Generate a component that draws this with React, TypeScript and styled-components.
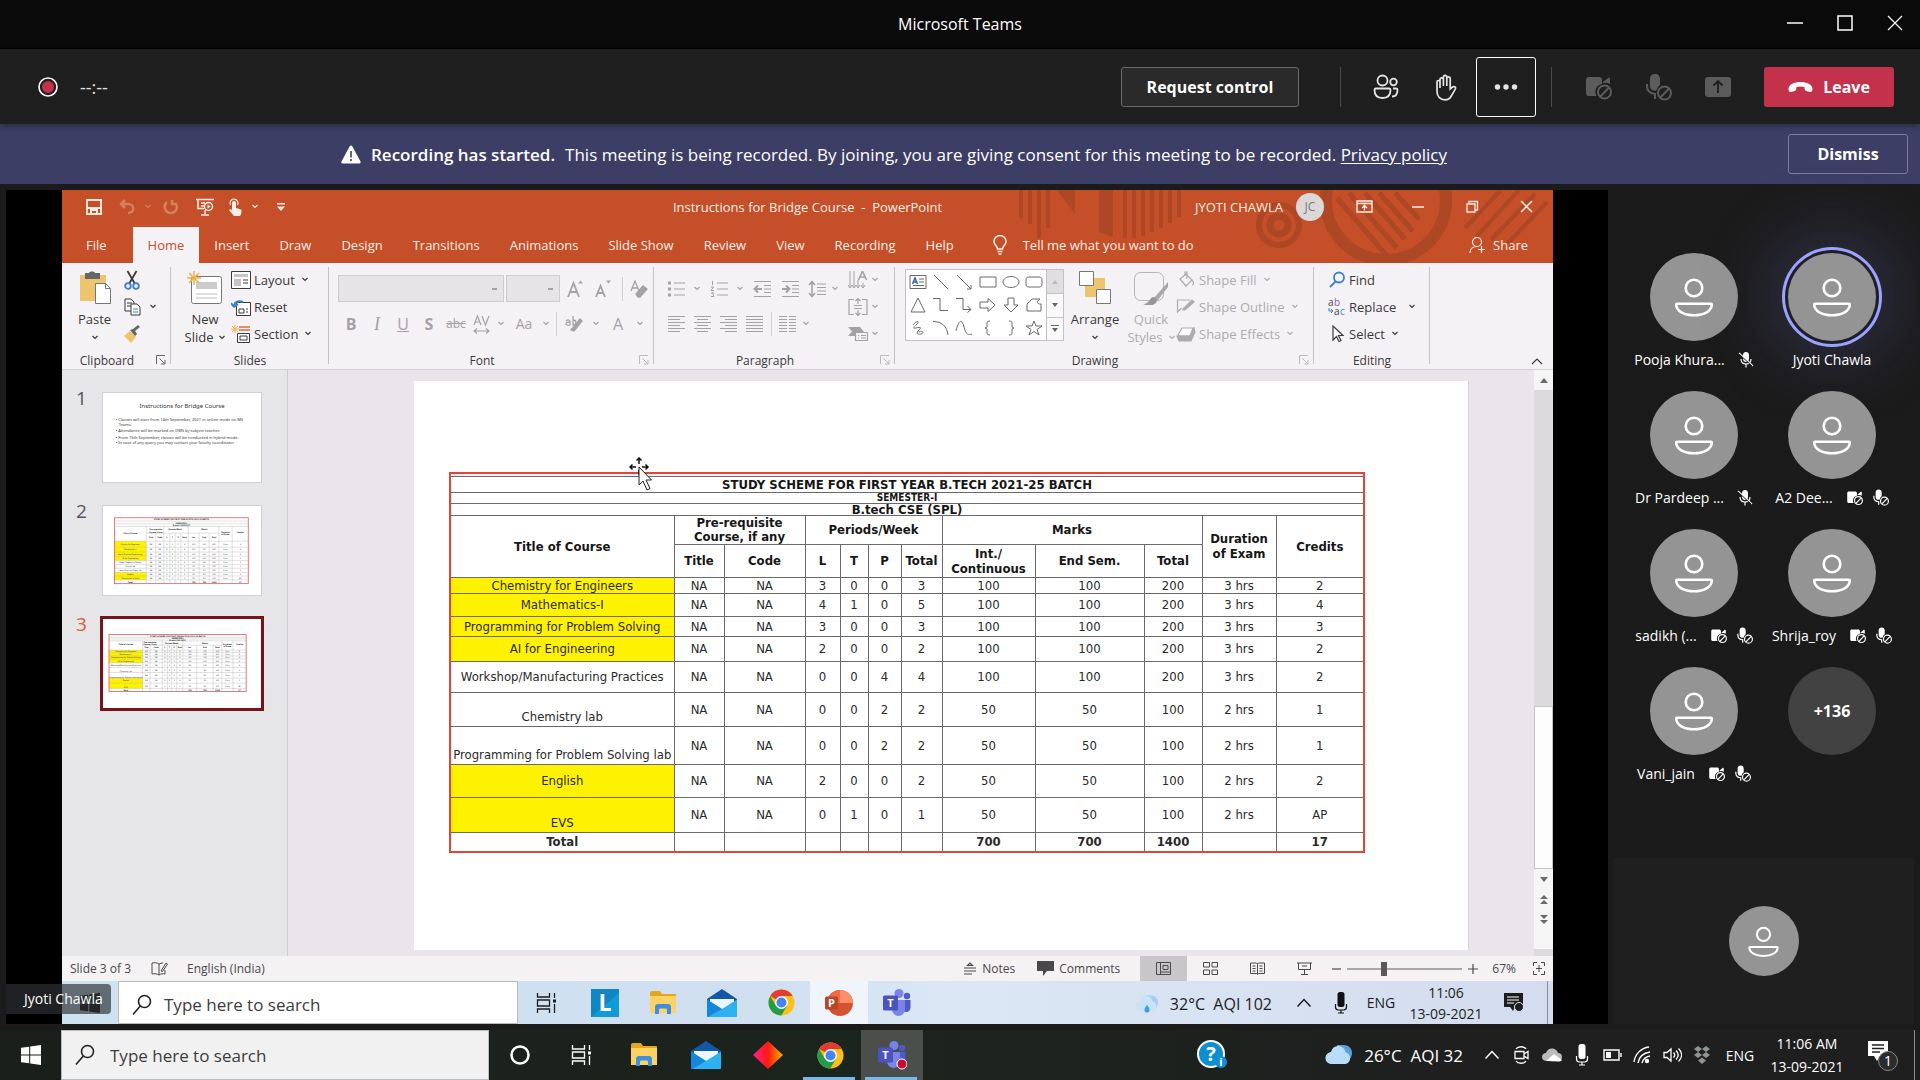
import React from "react";
import styled, { createGlobalStyle, css } from "styled-components";

const ui = `"Open Sans", "Noto Sans", sans-serif`;
const tableFont = `"DejaVu Sans Condensed", "DejaVu Sans", sans-serif`;

const Global = createGlobalStyle`
  * { box-sizing: border-box; }
  html, body { margin: 0; background: #1b1b1b; }
  body { font-family: ${ui}; color: #fff; }
  button, input, select { font: inherit; color: inherit; margin: 0; }
  button { background: none; border: 0; padding: 0; }
  svg { display: block; flex: none; }
`;

const Page = styled.div`
  min-height: 100vh;
  display: flex;
  flex-direction: column;
`;

/* ---------- icon helpers ---------- */
type IconProps = { w?: number; h?: number; box?: string; children: React.ReactNode; stroke?: number };
const Line = ({ w = 20, h = 20, box, children, stroke = 1.2 }: IconProps) => (
  <svg width={w} height={h} viewBox={box || `0 0 ${w} ${h}`} fill="none" stroke="currentColor" strokeWidth={stroke} aria-hidden="true">
    {children}
  </svg>
);
const Solid = ({ w = 20, h = 20, box, children }: IconProps) => (
  <svg width={w} height={h} viewBox={box || `0 0 ${w} ${h}`} fill="currentColor" aria-hidden="true">
    {children}
  </svg>
);
const Chevron = () => (
  <Line w={6} h={5} stroke={1.2}><path d="M.5 1 3 3.500 5.500 1" /></Line>
);

/* ---------- meeting window chrome ---------- */
const TitleBar = styled.header`
  height: 49px;
  display: grid;
  grid-template-columns: 1fr auto 1fr;
  align-items: center;
  background: #0a0a0a;
  border-bottom: 1px solid #000;
`;
const AppTitle = styled.h1`
  grid-column: 2;
  margin: 0;
  font-size: 16px;
  font-weight: 400;
`;
const WindowButtons = styled.div`
  display: flex;
  justify-content: flex-end;
`;
const WindowButton = styled.button`
  width: 50px;
  height: 48px;
  padding-bottom: 2px;
  display: grid;
  place-items: center;
`;
const Toolbar = styled.div`
  height: 75px;
  padding: 0 26px 0 38px;
  display: flex;
  align-items: center;
  background: #1f1f1f;
  box-shadow: 0 2px 6px rgba(0, 0, 0, 0.35);
  z-index: 1;
`;
const Timer = styled.span`
  margin-left: 22px;
  flex: 1;
  font-size: 18px;
  color: #e0e0e0;
`;
const OutlineButton = styled.button<{ $w: number }>`
  width: ${(p) => p.$w}px;
  height: 40px;
  border: 1px solid #6a6a6a;
  border-radius: 3px;
  background: #2a2a2a;
  font-size: 16px;
  font-weight: 700;
`;
const DismissButton = styled(OutlineButton)`
  background: transparent;
  border-color: #7c7ca0;
`;
const Divider = styled.span<{ $left: number; $right: number }>`
  width: 1px;
  height: 40px;
  margin: 0 ${(p) => p.$right}px 0 ${(p) => p.$left}px;
  background: #4a4a4a;
`;
const ToolButton = styled.button<{ $focus?: boolean; $off?: boolean }>`
  width: 60px;
  height: 60px;
  display: grid;
  place-items: center;
  color: ${(p) => (p.$off ? "#5c5c5c" : "#e4e4e4")};
  ${(p) => p.$focus && css`
    border: 1px solid #fff;
    border-radius: 3px;
  `}
`;
const LeaveButton = styled.button`
  width: 130px;
  height: 40px;
  margin-left: 16px;
  display: flex;
  align-items: center;
  justify-content: center;
  gap: 10px;
  border-radius: 3px;
  background: #c4314b;
  font-size: 16px;
  font-weight: 700;
`;
const Banner = styled.div`
  height: 60px;
  padding-right: 12px;
  display: flex;
  align-items: center;
  background: #3d3e66;
  font-size: 17px;
`;
const BannerText = styled.p`
  flex: 1;
  margin: 0;
  display: flex;
  align-items: center;
  justify-content: center;
  gap: 10px;
`;
const BannerLead = styled.strong`
  font-weight: 600;
`;
const PolicyLink = styled.a`
  color: #fff;
  text-decoration: underline;
  text-underline-offset: 2px;
`;

/* ---------- stage ---------- */
const Main = styled.main`
  flex: 1;
  display: flex;
  padding: 6px 0 6px 6px;
  background: #1b1b1b;
`;
const Stage = styled.section`
  position: relative;
  flex: 1;
  padding: 0 55px 0 56px;
  display: flex;
  background: #000;
`;
const PresenterTag = styled.span`
  position: absolute;
  left: 0;
  bottom: 10px;
  padding: 0 8px 0 18px;
  border-radius: 0 4px 4px 0;
  background: rgba(45, 48, 54, 0.68);
  font-size: 14px;
  line-height: 30px;
`;
const Share = styled.div`
  flex: 1;
  min-width: 0;
  display: flex;
  flex-direction: column;
  background: #f5f2f5;
  color: #3b393c;
  font-size: 13px;
`;

/* ---------- PowerPoint title + tabs ---------- */
const PptHead = styled.div`
  position: relative;
  background: #c44f28;
  color: #fdeee6;
`;
const HeadArt = styled.div`
  position: absolute;
  top: 0;
  right: 0;
  opacity: 0.6;
`;
const PptTitle = styled.div`
  position: relative;
  height: 37px;
  padding-bottom: 4px;
  display: grid;
  grid-template-columns: 1fr auto 1fr;
  align-items: center;
`;
const Quick = styled.div`
  display: flex;
  padding-left: 16px;
`;
const Cell = styled.button<{ $w: number; $h?: number; $dim?: boolean }>`
  width: ${(p) => p.$w}px;
  height: ${(p) => p.$h || 27}px;
  flex: none;
  display: grid;
  place-items: center;
  opacity: ${(p) => (p.$dim ? 0.3 : 1)};
`;
const DocName = styled.span`
  white-space: pre;
`;
const Account = styled.div`
  display: flex;
  align-items: center;
  justify-content: flex-end;
`;
const Initials = styled.span`
  width: 28px;
  height: 28px;
  margin: 0 13px;
  border-radius: 50%;
  background: #dcd8d8;
  color: #77777a;
  text-align: center;
  font-size: 12px;
  line-height: 28px;
`;
const Tabs = styled.nav`
  position: relative;
  height: 36px;
  padding-left: 9px;
  padding-right: 25px;
  display: flex;
  align-items: stretch;
`;
const Tab = styled.button<{ $on?: boolean; $file?: boolean }>`
  padding: 0 15px;
  margin-right: ${(p) => (p.$file ? 11 : 0)}px;
  background: ${(p) => (p.$on ? "#f5f2f5" : "transparent")};
  color: ${(p) => (p.$on ? "#c44f28" : "inherit")};
`;
const TellMe = styled.button`
  margin: 0 auto 0 24px;
  display: flex;
  align-items: center;
  gap: 16px;
`;
const ShareButton = styled.button`
  display: flex;
  align-items: center;
  gap: 7px;
`;

/* ---------- ribbon ---------- */
const Ribbon = styled.div`
  height: 107px;
  display: grid;
  grid-template-columns: 109px 158px 325px 241px 419px 116px 1fr;
  border-bottom: 1px solid #d2cfd3;
`;
const Group = styled.section`
  position: relative;
  padding-top: 3px;
  display: flex;
  flex-direction: column;
  &::after {
    content: "";
    position: absolute;
    right: 0;
    top: 4px;
    bottom: 5px;
    width: 1px;
    background: #c4c0c4;
  }
`;
const GroupBody = styled.div<{ $left?: number; $gray?: boolean }>`
  height: 81px;
  padding-left: ${(p) => p.$left || 0}px;
  display: flex;
  color: ${(p) => (p.$gray ? "#a5a2a5" : "inherit")};
`;
const GroupFoot = styled.div`
  display: flex;
  align-items: center;
  height: 22px;
  padding-top: 4px;
  font-size: 12px;
`;
const GroupName = styled.span`
  flex: 1;
  padding-left: 4px;
  text-align: center;
`;
const PlainName = styled(GroupName)`
  padding-left: 0;
`;
const Launcher = styled.button<{ $dim?: boolean }>`
  width: 15px;
  margin-left: 8px;
  color: ${(p) => (p.$dim ? "#bdbabd" : "#666")};
`;
const Big = styled.button<{ $w: number; $dim?: boolean }>`
  width: ${(p) => p.$w}px;
  height: 81px;
  padding-top: 5px;
  flex: none;
  display: flex;
  flex-direction: column;
  align-items: center;
  line-height: 18px;
  color: ${(p) => (p.$dim ? "#aeabae" : "inherit")};
  & > svg { margin-bottom: 5px; }
`;
const BigLine = styled.span`
  height: 18px;
  display: flex;
  align-items: center;
  gap: 6px;
`;
const Stack = styled.div`
  display: flex;
  flex-direction: column;
`;
const StackRow = styled.div`
  display: flex;
  height: 27px;
`;
const Small = styled.button<{ $dim?: boolean }>`
  height: 27px;
  display: flex;
  align-items: center;
  gap: 3px;
  white-space: nowrap;
  color: ${(p) => (p.$dim ? "#aeabae" : "inherit")};
`;
const SmallText = styled.span<{ $wide?: boolean }>`
  padding-right: ${(p) => (p.$wide ? 10 : 4)}px;
`;
const Rows = styled.div<{ $w?: number }>`
  width: ${(p) => (p.$w ? `${p.$w}px` : "auto")};
  padding-top: 9px;
  display: flex;
  flex-direction: column;
  gap: 8px;
`;
const Row = styled.div`
  height: 27px;
  display: flex;
  align-items: center;
`;
const Combo = styled.select<{ $w: number }>`
  appearance: none;
  width: ${(p) => p.$w}px;
  height: 27px;
  margin-right: 2px;
  border: 1px solid #cfccd0;
  border-radius: 0;
  background: #e7e4e8 linear-gradient(#a5a2a5, #a5a2a5) right 6px center / 5px 2px no-repeat;
  opacity: 1;
`;
const Sep = styled.span`
  width: 1px;
  height: 24px;
  margin: 0 4px;
  background: #d2cfd2;
`;
const Glyph = styled.span<{ $size?: number; $bold?: boolean; $italic?: boolean; $line?: string }>`
  font-size: ${(p) => p.$size || 16}px;
  line-height: 20px;
  font-weight: ${(p) => (p.$bold ? 700 : 400)};
  font-style: ${(p) => (p.$italic ? "italic" : "normal")};
  font-family: ${(p) => (p.$italic ? `"Liberation Serif", serif` : "inherit")};
  text-decoration: ${(p) => p.$line || "none"};
`;
const Gallery = styled.div`
  width: 159px;
  height: 72px;
  margin-top: 3px;
  display: flex;
  border: 1px solid #c4c1c5;
  background: #fff;
`;
const Shapes = styled.div`
  flex: 1;
  display: grid;
  grid-template-columns: repeat(6, 1fr);
  place-items: center;
  color: #6a686b;
`;
const GalleryScroll = styled.div`
  width: 17px;
  display: grid;
  grid-template-rows: repeat(3, 1fr);
  place-items: stretch;
  border-left: 1px solid #c4c1c5;
  color: #666;
`;
const ScrollCell = styled.button<{ $off?: boolean }>`
  display: grid;
  place-items: center;
  background: ${(p) => (p.$off ? "#e1dee1" : "#fbfafb")};
  color: ${(p) => (p.$off ? "#bbb" : "#666")};
  & + & { border-top: 1px solid #c4c1c5; }
`;
const Collapse = styled.button`
  justify-self: end;
  align-self: end;
  padding: 0 10px 4px 0;
`;

/* ---------- slide area ---------- */
const Work = styled.div`
  flex: 1;
  display: flex;
  background: #e9e5ea;
`;
const Thumbs = styled.ol`
  width: 226px;
  margin: 0;
  padding: 23px 0 0 14px;
  list-style: none;
  display: flex;
  flex-direction: column;
  gap: 24px;
  border-right: 1px solid #cfccd0;
  background: #e6e5e8;
`;
const ThumbItem = styled.li<{ $on?: boolean }>`
  display: grid;
  grid-template-columns: 27px 158px;
  font-size: 19px;
  line-height: 10px;
  color: ${(p) => (p.$on ? "#e0593a" : "#565458")};
`;
const ThumbFrame = styled.div<{ $on?: boolean }>`
  height: 89px;
  background: #fff;
  outline: ${(p) => (p.$on ? "3px solid #75141b" : "1px solid #cfd0d6")};
`;
const Canvas = styled.div`
  position: relative;
  flex: 1;
  display: flex;
  padding: 11px 65px 6px 126px;
`;
const Slide = styled.div`
  flex: 1;
  padding: 91px 103px 0 35px;
  background: #fff;
  border-right: 1px solid #d6d3d8;
`;
const MoveCursor = styled.div`
  position: absolute;
  left: 341px;
  top: 87px;
`;
const ScrollBar = styled.div`
  width: 19px;
  padding-bottom: 7px;
  display: flex;
  flex-direction: column;
  align-items: stretch;
  background: #dddade;
  color: #6a686b;
`;
const ScrollBtn = styled.button`
  height: 20px;
  display: grid;
  place-items: center;
  background: #f6f5f6;
`;
const ScrollTrack = styled.div`
  flex: 1;
  display: flex;
  align-items: flex-end;
`;
const ScrollThumb = styled.div`
  flex: 1;
  height: 34%;
  border: 1px solid #c6c3c7;
  background: #fdfdfd;
`;

/* ---------- study scheme table ---------- */
const Scheme = styled.table`
  width: 100%;
  table-layout: fixed;
  border-collapse: collapse;
  border: 2px solid #dd4638;
  font-family: ${tableFont};
  font-size: 13px;
  line-height: 15px;
  color: #2a2a2a;
  text-align: center;
`;
const SchemeRow = styled.tr<{ $h: number }>`
  height: ${(p) => p.$h}px;
`;
const Th = styled.th<{ $size?: number; $lh?: number }>`
  padding: 0;
  border: 1px solid #6b696b;
  font-size: ${(p) => p.$size || 13}px;
  line-height: ${(p) => p.$lh || 15}px;
  white-space: pre-line;
  color: #161616;
`;
const Td = styled.td<{ $mark?: boolean; $low?: boolean; $bold?: boolean }>`
  padding: 0;
  padding-bottom: ${(p) => (p.$low ? 2 : 0)}px;
  border: 1px solid #6b696b;
  white-space: nowrap;
  vertical-align: ${(p) => (p.$low ? "bottom" : "middle")};
  background: ${(p) => (p.$mark ? "#fff200" : "transparent")};
  font-weight: ${(p) => (p.$bold ? 700 : 400)};
`;
const Strip = styled.td`
  padding: 0;
  height: 3px;
  background: #f1eff0;
`;

/* ---------- status bar ---------- */
const Status = styled.footer`
  height: 25px;
  padding-left: 8px;
  display: flex;
  align-items: center;
  background: #f5f2f4;
  font-size: 12px;
  color: #4a484b;
`;
const StatusText = styled.button<{ $right?: number }>`
  display: flex;
  align-items: center;
  gap: 5px;
  margin-right: ${(p) => p.$right || 0}px;
`;
const Spring = styled.span`
  flex: 1;
`;
const ViewButton = styled.button<{ $on?: boolean }>`
  width: 47px;
  height: 25px;
  display: grid;
  place-items: center;
  background: ${(p) => (p.$on ? "#c9c6c9" : "transparent")};
`;
const ZoomRange = styled.input`
  appearance: none;
  width: 115px;
  height: 14px;
  margin: 0 6px;
  background: linear-gradient(#a9a6a9, #a9a6a9) center / 100% 2px no-repeat;
  &::-webkit-slider-thumb {
    appearance: none;
    width: 6px;
    height: 14px;
    background: #5b595c;
  }
`;

/* ---------- task bars ---------- */
const SharedTaskbar = styled.div`
  height: 43px;
  display: flex;
  background: linear-gradient(90deg, #cfe2f0, #cfdff0 45%, #dbe7f5 60%, #d3dcee);
  color: #1d1d20;
`;
const Taskbar = styled.footer`
  height: 50px;
  display: flex;
  background: linear-gradient(90deg, #1a1f1b, #1c241e 45%, #1f1f1f 80%);
`;
const Task = styled.button<{ $w: number; $state?: "open" | "active" | "light" }>`
  position: relative;
  width: ${(p) => p.$w}px;
  flex: none;
  display: grid;
  place-items: center;
  ${(p) => p.$state === "light" && css`background: #eff5fb;`}
  ${(p) => p.$state === "active" && css`background: #4a4f4c;`}
  ${(p) => (p.$state === "active" || p.$state === "open") && css`
    &::after {
      content: "";
      position: absolute;
      left: 4px;
      right: 6px;
      bottom: 0;
      height: 3px;
      background: #76b9ed;
    }
  `}
`;
const Search = styled.label<{ $w: number; $own?: boolean }>`
  width: ${(p) => p.$w}px;
  flex: none;
  padding-top: ${(p) => (p.$own ? 0 : 4)}px;
  padding-left: 13px;
  display: flex;
  align-items: center;
  gap: ${(p) => (p.$own ? 15 : 12)}px;
  border: 1px solid #b9bcc0;
  background: ${(p) => (p.$own ? "#f1f1f1" : "#fff")};
  color: #222;
`;
const SearchInput = styled.input`
  flex: 1;
  min-width: 0;
  border: 0;
  padding: 0;
  background: transparent;
  font-size: 17px;
  &::placeholder { color: #3c3c3c; opacity: 1; }
`;
const Weather = styled.button<{ $right: number; $top?: number; $size: number }>`
  display: flex;
  align-items: center;
  gap: 11px;
  padding-top: ${(p) => p.$top || 0}px;
  margin-right: ${(p) => p.$right}px;
  font-size: ${(p) => p.$size}px;
  white-space: pre;
`;
const Lang = styled.button<{ $w: number }>`
  width: ${(p) => p.$w}px;
  font-size: 14px;
`;
const Clock = styled.button<{ $tall?: boolean }>`
  width: 88px;
  display: flex;
  flex-direction: column;
  justify-content: center;
  align-items: center;
  font-size: 14px;
  line-height: ${(p) => (p.$tall ? 23 : 21)}px;
`;
const DesktopEdge = styled.span`
  width: 6px;
  border-left: 1px solid #8d8f92;
`;
const HelpTask = styled.button`
  margin: 0 98px 0 auto;
`;

/* ---------- participants ---------- */
const Side = styled.aside`
  width: 312px;
  padding: 0 6px 0 5px;
  display: flex;
  flex-direction: column;
`;
const People = styled.ul`
  flex: 1;
  margin: 0;
  padding: 63px 0 0 12px;
  display: grid;
  grid-template-columns: 138px 138px;
  grid-auto-rows: 138px;
  list-style: none;
`;
const Person = styled.li`
  display: flex;
  flex-direction: column;
  align-items: center;
`;
const Avatar = styled.span<{ $size: number; $speaking?: boolean; $more?: boolean }>`
  width: ${(p) => p.$size}px;
  height: ${(p) => p.$size}px;
  border-radius: 50%;
  display: grid;
  place-items: center;
  background: ${(p) => (p.$more ? "#424242" : "#949494")};
  font-size: 16px;
  font-weight: 700;
  box-shadow: ${(p) => (p.$speaking ? "0 0 0 3px #1f1f2b, 0 0 0 6px #9ea2ff, 0 0 70px 20px rgba(110, 115, 200, 0.25)" : "none")};
`;
const PersonName = styled.span`
  height: 36px;
  display: flex;
  align-items: center;
  justify-content: center;
  gap: 9px;
  font-size: 14px;
  white-space: nowrap;
`;
const NameText = styled.span<{ $pad?: boolean }>`
  padding-right: ${(p) => (p.$pad ? 4 : 0)}px;
`;
const Self = styled.div`
  height: 166px;
  display: grid;
  place-items: center;
  background: #1f1f1f;
`;

/* ---------- drawings ---------- */
const PersonGlyph = ({ size }: { size: number }) => (
  <svg width={size} height={size} viewBox="0 0 44 44" fill="none" stroke="#fff" strokeWidth="2.6" aria-hidden="true">
    <circle cx="22" cy="13" r="8.3" />
    <path d="M5 28.800h34c.5 0 .8.300.8.800C39.800 36 32 40.200 22 40.200S4.200 36 4.200 29.600c0-.5.300-.8.800-.8Z" />
  </svg>
);
const CamOff = ({ big }: { big?: boolean }) => (
  <Solid w={big ? 28 : 17} h={big ? 28 : 17} box="0 0 28 28">
    <path d="M5 4h10c2 0 3 1 3 3v4a8 8 0 0 0-5.500 12H5c-2 0-3-1-3-3V7c0-2 1-3 3-3Z" />
    <path d="m19 9 5-4c1-.7 2-.4 2 1v5a8 8 0 0 0-7-.8Z" />
    <g fill="none" stroke="currentColor" strokeWidth="2"><circle cx="20.500" cy="19" r="6.500" /><path d="m16 24 9-9.500" /></g>
  </Solid>
);
const MicOff = ({ big }: { big?: boolean }) => (
  <Solid w={big ? 28 : 17} h={big ? 28 : 17} box="0 0 28 28">
    <path d="M11 1c3 0 5 2 5 5v6a8 8 0 0 0-3.500 5.500C8.500 18.500 6 16 6 13V6c0-3 2-5 5-5Z" />
    <g fill="none" stroke="currentColor" strokeWidth="2"><path d="M3 11v2c0 4.500 3 7.500 8 8v5" /><circle cx="20.500" cy="20" r="6.500" /><path d="m16 25 9-9.500" /></g>
  </Solid>
);
const MicSlash = () => (
  <Solid w={16} h={17} box="0 0 16 17">
    <path d="M8 1c1.700 0 3 1.300 3 3v4c0 1.700-1.300 3-3 3S5 9.700 5 8V4c0-1.700 1.300-3 3-3Z" />
    <g fill="none" stroke="currentColor" strokeWidth="1.200"><path d="M3 8c0 3 2 5 5 5s5-2 5-5M8 13v3.500M1 2l14 13" /></g>
    <path d="m1 3 13 12" stroke="#1b1b1b" strokeWidth="1" />
  </Solid>
);
const WinLogo = ({ size, color }: { size: number; color: string }) => (
  <svg width={size} height={size} viewBox="0 0 20 20" fill={color} aria-hidden="true">
    <path d="M0 2.800 8.200 1.700v7.800H0ZM9.200 1.500 20 0v9.500H9.200ZM0 10.500h8.200v7.800L0 17.200ZM9.200 10.500H20V20L9.200 18.500Z" />
  </svg>
);
const Magnifier = () => (
  <Line w={20} h={22} stroke={1.600}><circle cx="12.500" cy="7.500" r="6" /><path d="M8.300 12 1 20.500" /></Line>
);
const TaskView = () => (
  <Line w={22} h={22} stroke={1.300}>
    <path d="M1.500 1v4h12V1M1.500 21v-4h12v4M1.500 8h12v6h-12ZM18.500 1v5M18.500 12v9" /><path d="M17 7.500h3v3h-3z" fill="currentColor" stroke="none" />
  </Line>
);
const Folder = () => (
  <svg width="28" height="26" viewBox="0 0 28 26" aria-hidden="true">
    <path d="M1 3c0-1 .5-2 2-2h8l2 3h13c1 0 1 .5 1 1.500V9H1Z" fill="#e7a51c" />
    <path d="M1 6h26v17H1Z" fill="#fdd265" />
    <path d="M6 24v-7c0-2 1-3 3-3h10c2 0 3 1 3 3v7h-4v-4c0-1-.5-1.500-1.500-1.500h-5c-1 0-1.500.5-1.500 1.500v4Z" fill="#3d8fe0" />
  </svg>
);
const Mail = () => (
  <svg width="30" height="28" viewBox="0 0 30 28" aria-hidden="true">
    <path d="M15 0 30 10v6H0v-6Z" fill="#1358a8" /><path d="M3 10h24v10H3Z" fill="#eef6fd" />
    <path d="M30 10.500V27c0 .6-.4 1-1 1H1c-.6 0-1-.4-1-1V10.500L15 20Z" fill="#2cb2f1" />
    <path d="M0 10.500 15 20 1 28c-.6 0-1-.4-1-1Z" fill="#1487dc" />
  </svg>
);
const Chrome = () => (
  <svg width="27" height="27" viewBox="0 0 28 28" aria-hidden="true">
    <circle cx="14" cy="14" r="13.500" fill="#fbc116" />
    <path d="M14 14 2.300 7.200A13.500 13.500 0 0 1 25.700 7.300L14 7.300Z" fill="#e33b2e" />
    <path d="M2.300 7.200A13.500 13.500 0 0 0 13.800 27.500L19.800 17.300 8.200 17.300Z" fill="#249c49" />
    <circle cx="14" cy="14" r="6.700" fill="#fff" /><circle cx="14" cy="14" r="5.200" fill="#4285f4" />
  </svg>
);
const LogoLetter = styled.text`
  font-family: ${ui};
  font-weight: 700;
  fill: #fff;
  text-anchor: middle;
`;
const TeamsLogo = ({ recording }: { recording?: boolean }) => (
  <svg width="30" height="30" viewBox="0 0 30 30" aria-hidden="true">
    <circle cx="25" cy="8" r="3.200" fill="#5059c9" /><path d="M20 12h8.500v7c0 3-2 5-4.500 5s-4-2-4-4Z" fill="#5059c9" />
    <circle cx="17" cy="5.500" r="4.500" fill="#7b83eb" /><path d="M10 12h13v9c0 4-3 7-6.500 7S10 25 10 21Z" fill="#7b83eb" />
    <rect x="1" y="7.500" width="15" height="15" rx="1.500" fill="#4b53bc" />
    <LogoLetter x="8.500" y="19" fontSize="11">T</LogoLetter>
    {recording && <circle cx="25" cy="24" r="5" fill="#c50f2e" stroke="#fff" strokeWidth="1" />}
  </svg>
);
const PptLogo = () => (
  <svg width="28" height="28" viewBox="0 0 28 28" aria-hidden="true">
    <circle cx="15" cy="14" r="13" fill="#d35230" /><path d="M15 1a13 13 0 0 1 13 13H15Z" fill="#ff8f6b" /><path d="M15 1v13H2A13 13 0 0 1 15 1Z" fill="#ed6c47" />
    <rect x="0" y="7.500" width="13" height="13" rx="1.500" fill="#b7472a" /><LogoLetter x="6.500" y="18" fontSize="11">P</LogoLetter>
  </svg>
);
const LLogo = () => (
  <svg width="28" height="28" viewBox="0 0 28 28" aria-hidden="true">
    <rect width="28" height="28" fill="#1286c4" /><path d="M0 28 28 4v24Z" fill="#0f9bd6" />
    <LogoLetter x="14" y="22" fontSize="23">L</LogoLetter>
  </svg>
);
const Diamond = () => (
  <svg width="30" height="28" viewBox="0 0 30 28" aria-hidden="true">
    <defs>
      <linearGradient id="diamondFill"><stop offset="0" stopColor="#ff1e8c" /><stop offset=".5" stopColor="#ff1a10" /><stop offset="1" stopColor="#ffb000" /></linearGradient>
    </defs>
    <path d="M15 0 30 14 15 28 0 14Z" fill="url(#diamondFill)" />
  </svg>
);
const Cloud = ({ rain }: { rain?: boolean }) => (
  <svg width={rain ? 24 : 28} height={rain ? 20 : 22} viewBox="0 0 28 22" aria-hidden="true">
    <path d="M12 1h7c5 0 8 4 8 8s-3 9-7 9h-6Z" fill={rain ? "#a9cdf0" : "#5d9edb"} />
    <path d="M7 20c-4 0-6.500-2.500-6.500-6S3 8.500 6 8c1-4 3.500-6 7-6 4.500 0 7 3 7.500 6.500 3 .5 4.500 3 4.500 5.500 0 3.500-2 6-5.500 6Z" fill={rain ? "#c9e2f7" : "#b9ddf6"} />
    {rain && <path d="M14 12c2 3 3 4 3 6s-1.500 3-3 3-3-1-3-3 1-3 3-6Z" fill="#3aa0ea" />}
  </svg>
);
const MicTray = ({ color }: { color: string }) => (
  <svg width="14" height="22" viewBox="0 0 14 22" fill={color} aria-hidden="true">
    <rect x="3.500" y="0" width="7" height="15" rx="2.500" /><path d="M1.500 12v3c0 2 1 3 3 3h5c2 0 3-1 3-3v-3M7 18v3M4 21h6" fill="none" stroke={color} strokeWidth="1.200" />
  </svg>
);
const CaretUp = () => <Line w={16} h={10} stroke={1.500}><path d="m1.500 8.500 6.500-7 6.500 7" /></Line>;

const lines = (ys: number[], a: number, b: number) => ys.map((y) => `M${a} ${y}H${b}`).join("");

const shapePaths: string[] = [
  "M1 1.500h16v13H1ZM10 5h5M10 8h5M4 11.500h11",
  "M2 1 16 15",
  "M2 1 16 15M16 11v4h-4",
  "M1 3h16v10H1Z",
  "M9 2.500c4.500 0 8 2.500 8 5.500s-3.500 5.500-8 5.500S1 11 1 8s3.500-5.500 8-5.500Z",
  "M4 3h10c2 0 3 1 3 3v4c0 2-1 3-3 3H4c-2 0-3-1-3-3V6c0-2 1-3 3-3Z",
  "M9 1 16 15H2Z",
  "M1 1.500h7v12h8",
  "M1 1.500h7v11h8M12.500 9l3.500 3.500-3.500 3",
  "M1 5h8V1.500l7 6.500-7 6.500V11H1Z",
  "M6 1h6v7h4l-7 7-7-7h4Z",
  "M7 2h8c-4 3-3 5 1 5v7H2V7Z",
  "M4 5c4-5 7-4 4-1s-5 5-1 4 6-1 3 2-2 5 2 4 1-4-2-2",
  "M1 1.500c9 0 14 5 15 13.500",
  "M1 11c3-12 6-12 8-4s4 8 8 7",
  "M11 1c-2 0-3 .5-3 2v3c0 1-.5 2-2 2 1.500 0 2 1 2 2v3c0 1.500 1 2 3 2",
  "M7 1c2 0 3 .5 3 2v3c0 1 .5 2 2 2-1.500 0-2 1-2 2v3c0 1.500-1 2-3 2",
  "m9 1 2 5h6l-5 3.500 2 5.500-5-3.500L4 15l2-5.500L1 6h6Z",
];

const tabNames = ["File", "Home", "Insert", "Draw", "Design", "Transitions", "Animations", "Slide Show", "Review", "View", "Recording", "Help"];

type Course = { name: string; h: number; v: string[]; mark?: boolean; low?: boolean };
const na = ["NA", "NA"];
const courses: Course[] = [
  { name: "Chemistry for Engineers", h: 16, mark: true, v: [...na, "3", "0", "0", "3", "100", "100", "200", "3 hrs", "2"] },
  { name: "Mathematics-I", h: 23, mark: true, v: [...na, "4", "1", "0", "5", "100", "100", "200", "3 hrs", "4"] },
  { name: "Programming for Problem Solving", h: 20, mark: true, v: [...na, "3", "0", "0", "3", "100", "100", "200", "3 hrs", "3"] },
  { name: "AI for Engineering", h: 25, mark: true, v: [...na, "2", "0", "0", "2", "100", "100", "200", "3 hrs", "2"] },
  { name: "Workshop/Manufacturing Practices", h: 31, v: [...na, "0", "0", "4", "4", "100", "100", "200", "3 hrs", "2"] },
  { name: "Chemistry lab", h: 34, low: true, v: [...na, "0", "0", "2", "2", "50", "50", "100", "2 hrs", "1"] },
  { name: "Programming for Problem Solving lab", h: 38, low: true, v: [...na, "0", "0", "2", "2", "50", "50", "100", "2 hrs", "1"] },
  { name: "English", h: 33, mark: true, v: [...na, "2", "0", "0", "2", "50", "50", "100", "2 hrs", "2"] },
  { name: "EVS", h: 35, mark: true, low: true, v: [...na, "0", "1", "0", "1", "50", "50", "100", "2 hrs", "AP"] },
];
const totals = ["Total", "", "", "", "", "", "", "700", "700", "1400", "", "17"];
const columns = [224, 50, 81, 35, 28, 33, 41, 93, 109, 58, 74, 88];

const physicsCourses: Course[] = [
  { name: "Physics for Engineers", h: 40, mark: true, v: [...na, "3", "0", "0", "3", "100", "100", "200", "3 hrs", "3"] },
  { name: "Mathematics-I", h: 32, mark: true, v: courses[1].v },
  { name: "Basic Electrical Engineering", h: 28, mark: true, v: courses[2].v },
  { name: "AI for Engineering", h: 28, mark: true, v: courses[3].v },
  { name: "Engg. Graphics & Design", h: 28, v: courses[4].v },
  { name: "Physics lab", h: 24, v: courses[5].v },
  { name: "Basic Electrical Engg. lab", h: 28, v: courses[6].v },
  { name: "English", h: 24, mark: true, v: courses[7].v },
  { name: "Constitution of India", h: 26, mark: true, v: courses[8].v },
];

/* Miniature of a table slide, drawn in the slide's own units. */
const MiniText = styled.text`
  font-family: ${tableFont};
  text-anchor: middle;
  fill: #222;
`;
type MiniProps = { x: number; y: number; cols: number[]; rows: Course[]; heads: number[]; branch: string; foot: number };
const MiniSlide = ({ x, y, cols, rows, heads, branch, foot }: MiniProps) => {
  const xs = cols.reduce<number[]>((a, c) => [...a, a[a.length - 1] + c], [x]);
  const right = xs[xs.length - 1];
  const mid = (x + right) / 2;
  const [a, b, c, d, e] = heads;
  const top = y + a + b + c;
  const bodyTop = top + d + e;
  let cursor = bodyTop;
  const placed = rows.map((r) => {
    const at = cursor;
    cursor += r.h;
    return { ...r, at };
  });
  const end = cursor + foot;
  const cx = (i: number) => (xs[i] + xs[i + 1]) / 2;
  return (
    <svg width="158" height="89" viewBox="0 0 1053 592" aria-hidden="true">
      {placed.map((r) => r.mark && <rect key={r.name} x={xs[0]} y={r.at} width={cols[0]} height={r.h} fill="#fff200" />)}
      <g stroke="#999" strokeWidth="2" fill="none">
        <path d={`M${x} ${y + a}H${right}M${x} ${y + a + b}H${right}M${x} ${top}H${right}M${xs[1]} ${top + d}H${xs[10]}M${x} ${bodyTop}H${right}`} />
        <path d={placed.map((r) => `M${x} ${r.at + r.h}H${right}`).join("")} />
        <path d={[1, 3, 7, 10, 11].map((i) => `M${xs[i]} ${top}V${end}`).join("") + [2, 4, 5, 6, 8, 9].map((i) => `M${xs[i]} ${top + d}V${end}`).join("")} />
      </g>
      <rect x={x} y={y} width={right - x} height={end - y} fill="none" stroke="#d9505a" strokeWidth="5" />
      <g fontSize="13" fontWeight="700">
        <MiniText x={mid} y={y + a - 4}>STUDY SCHEME FOR FIRST YEAR B.TECH 2021-25 BATCH</MiniText>
        <MiniText x={mid} y={y + a + b - 1}>SEMESTER-I</MiniText>
        <MiniText x={mid} y={top - 2}>{branch}</MiniText>
        <MiniText x={cx(0)} y={top + (d + e) / 2}>Title of Course</MiniText>
        <MiniText x={xs[2]} y={top + d / 2}>Pre-requisite</MiniText>
        <MiniText x={xs[2]} y={top + d - 2}>Course, if any</MiniText>
        <MiniText x={xs[5]} y={top + d / 2 + 4}>Periods/Week</MiniText>
        <MiniText x={cx(8)} y={top + d / 2 + 4}>Marks</MiniText>
        <MiniText x={cx(10)} y={top + d}>Duration</MiniText>
        <MiniText x={cx(10)} y={top + d + 15}>of Exam</MiniText>
        <MiniText x={cx(11)} y={top + d}>Credits</MiniText>
        {["Title", "Code", "L", "T", "P", "Total", "Int.", "End", "Total"].map((t, i) => (
          <MiniText key={i} x={cx(i + 1)} y={top + d + e / 2 + 5}>{t}</MiniText>
        ))}
        {totals.map((t, i) => t && <MiniText key={i} x={cx(i)} y={end - 5}>{t}</MiniText>)}
      </g>
      <g fontSize="13">
        {placed.map((r) => (
          <React.Fragment key={r.name}>
            <MiniText x={cx(0)} y={r.low ? r.at + r.h - 4 : r.at + r.h / 2 + 5}>{r.name}</MiniText>
            {r.v.map((t, i) => <MiniText key={i} x={cx(i + 1)} y={r.at + r.h / 2 + 5}>{t}</MiniText>)}
          </React.Fragment>
        ))}
      </g>
    </svg>
  );
};
const IntroText = styled.text`
  font-family: "Noto Sans", sans-serif;
  fill: #333;
`;
const IntroSlide = () => (
  <svg width="158" height="89" viewBox="0 0 474 267" aria-hidden="true">
    <IntroText x="237" y="46" fontSize="18" textAnchor="middle">Instructions for Bridge Course</IntroText>
    <g fontSize="12">
      <IntroText x="38" y="85">• Classes will start from 14th September, 2021 in online mode on MS</IntroText>
      <IntroText x="47" y="98">Teams.</IntroText>
      <IntroText x="38" y="117">• Attendance will be marked on DMS by subject teacher.</IntroText>
      <IntroText x="38" y="138">• From 15th September, classes will be conducted in hybrid mode.</IntroText>
      <IntroText x="38" y="154">• In case of any query you may contact your faculty coordinator</IntroText>
    </g>
  </svg>
);

const Dialog = ({ dim }: { dim?: boolean }) => (
  <Launcher $dim={dim} aria-label="More options">
    <Line w={10} h={10} stroke={1}><path d="M.5 9V.5H9M3.500 3.500l5.500 5.500M9 5v4H5" /></Line>
  </Launcher>
);
const Foot = ({ name, dim, plain }: { name: string; dim?: boolean; plain?: boolean }) => (
  <GroupFoot>
    {plain ? <PlainName>{name}</PlainName> : <><GroupName>{name}</GroupName><Dialog dim={dim} /></>}
  </GroupFoot>
);

const RibbonBar = () => (
  <Ribbon>
    <Group>
      <GroupBody $left={4}>
        <Big $w={57}>
          <svg width="34" height="34" viewBox="0 0 34 34" aria-hidden="true">
            <path d="M2 4h26v26H2Z" fill="#efc46e" /><path d="M7 2h4c0-2 6-2 6 0h5v6H7Z" fill="#666" />
            <path d="M17.500 12.500h10l5 5v15h-15Z" fill="#fff" stroke="#777" /><path d="M27.500 12.500v5h5" fill="none" stroke="#777" />
          </svg>
          <BigLine>Paste</BigLine><BigLine><Chevron /></BigLine>
        </Big>
        <Stack>
          <Cell $w={18} aria-label="Cut">
            <Line w={16} h={20} stroke={1.800}><path d="M3.500 1 11 14M12.500 1 5 14" /><g stroke="#3c7fd0"><circle cx="4" cy="16" r="2.800" /><circle cx="12" cy="16" r="2.800" /></g></Line>
          </Cell>
          <StackRow>
            <Cell $w={18} aria-label="Copy">
              <Line w={17} h={18} stroke={1}><path d="M1 1h6l3 3v9H1ZM3 5h5M3 8h5" /><path d="M7 6h6l3 3v8H7Z" fill="#fff" /><path d="M9 11h5M9 14h5" stroke="#3c7fd0" /></Line>
            </Cell>
            <Cell $w={24} aria-label="Copy options"><Chevron /></Cell>
          </StackRow>
          <Cell $w={18} aria-label="Format Painter">
            <svg width="18" height="18" viewBox="0 0 18 18" aria-hidden="true"><path d="m1 11 6-5 6 6-5 6Z" fill="#efc46e" /><path d="m7 5 5 6 2-2-2-3 5-4-2-2-5 4Z" fill="#666" /></svg>
          </Cell>
        </Stack>
      </GroupBody>
      <Foot name="Clipboard" />
    </Group>

    <Group>
      <GroupBody $left={8}>
        <Big $w={52}>
          <svg width="36" height="34" viewBox="0 0 36 34" fill="none" stroke="#777" aria-hidden="true">
            <rect x="4.500" y="5.500" width="30" height="27" rx="2" fill="#fff" /><path d="M9 11h21v7H9Z" fill="#ccc" stroke="none" /><path d="M9 23h21M9 27h21" stroke="#bbb" />
            <path d="M7 0v14M0 7h14M2 2l10 10M12 2 2 12" stroke="#efb04a" strokeWidth="1.500" />
          </svg>
          <BigLine>New</BigLine><BigLine>Slide <Chevron /></BigLine>
        </Big>
        <Stack>
          <Small><Line w={20} h={18} stroke={1}><path d="M.5.500h19v17H.5Z" fill="#fff" /><path d="M3 3h14v3H3ZM3 8h7v7H3Z" fill="#c5c3c6" stroke="none" /><path d="M12 9h5M12 12h5" /></Line><SmallText>Layout</SmallText><Chevron /></Small>
          <Small><Line w={20} h={18} stroke={1}><path d="M5.500 4.500h14v13h-14Z" fill="#fff" /><path d="M8 11h5v4H8ZM15 11h2M15 14h2" /><path d="M3 9c0-5 4-7 9-5M3 9 0 5M3 9l4-3" stroke="#3c7fd0" strokeWidth="2" /></Line><SmallText>Reset</SmallText></Small>
          <Small><Line w={20} h={18} stroke={1}><path d="M6.500 8.500h12v9h-12ZM9 11h7v4H9Z" fill="#fff" /><path d="M8 2h11M8 5h11" stroke="#d6703e" strokeWidth="1.500" /><path d="M4 0v8M0 4h8M1 1l6 6M7 1 1 7" stroke="#efb04a" /></Line><SmallText>Section</SmallText><Chevron /></Small>
        </Stack>
      </GroupBody>
      <Foot name="Slides" plain />
    </Group>

    <Group>
      <GroupBody $left={9} $gray>
        <Rows>
          <Row>
            <Combo $w={166} disabled aria-label="Font name" />
            <Combo $w={54} disabled aria-label="Font size" />
            <Cell $w={26} aria-label="Increase font size"><Line w={18} h={20} stroke={1.800}><path d="m2 18 5.500-14L13 18M4 13h7" /><path d="m12 4.500 2.500-3 2.500 3Z" fill="currentColor" stroke="none" /></Line></Cell>
            <Cell $w={30} aria-label="Decrease font size"><Line w={18} h={20} stroke={1.800}><path d="m2 18 4.500-11L11 18M3.500 14h6" /><path d="m12 1.500 2.500 3 2.500-3Z" fill="currentColor" stroke="none" /></Line></Cell>
            <Sep />
            <Cell $w={24} aria-label="Clear formatting">
              <Line w={18} h={18} stroke={1.300}><path d="m1 11 4-10 4 10M2.500 8h5" /><path d="m6 14 7-8 4 3-7 8H8Z" fill="currentColor" /></Line>
            </Cell>
          </Row>
          <Row>
            <Cell $w={26}><Glyph $bold>B</Glyph></Cell>
            <Cell $w={26}><Glyph $italic $size={18}>I</Glyph></Cell>
            <Cell $w={26}><Glyph $line="underline">U</Glyph></Cell>
            <Cell $w={26}><Glyph $bold>S</Glyph></Cell>
            <Cell $w={28}><Glyph $size={12} $line="line-through">abc</Glyph></Cell>
            <Cell $w={24} aria-label="Character spacing">
              <Line w={18} h={20} stroke={1.200}><path d="m1 11 3.500-9L8 11M2.300 8h4.500M9 2l3.500 9L16 2M1 17h15M4 14.500 1 17l3 2.500M13 14.500l3 2.500-3 2.500" /></Line>
            </Cell>
            <Cell $w={14}><Chevron /></Cell>
            <Cell $w={32}><Glyph $size={14}>Aa</Glyph></Cell>
            <Cell $w={12}><Chevron /></Cell>
            <Sep />
            <Cell $w={26} aria-label="Highlight colour">
              <Line w={20} h={20} stroke={1.300}><path d="M2 7c2-2 4-1 4 1v3c-3 1-4-.5-4-1.500S4 8 6 8M9 2v9c4 0 4-5 0-5" /><path d="m7 16 9-11 2 2-8 10Z" fill="currentColor" /></Line>
            </Cell>
            <Cell $w={18}><Chevron /></Cell>
            <Cell $w={26}><Glyph>A</Glyph></Cell>
            <Cell $w={18}><Chevron /></Cell>
          </Row>
        </Rows>
      </GroupBody>
      <Foot name="Font" dim />
    </Group>

    <Group>
      <GroupBody $left={9} $gray>
        <Rows $w={182}>
          <Row>
            <Cell $w={26} aria-label="Bullets"><Line w={18} h={18}><path d={lines([3, 9, 15], 7, 18)} /><path d="M1 1.500h3v3H1ZM1 7.500h3v3H1ZM1 13.500h3v3H1Z" fill="currentColor" stroke="none" /></Line></Cell>
            <Cell $w={16}><Chevron /></Cell>
            <Cell $w={28} aria-label="Numbering"><Line w={18} h={18}><path d={lines([3, 9, 15], 7, 18)} /><path d="M2.500 1v4M1 7h2.500L1 10.500h3M1 13h3l-1 1.500 1 2H1" strokeWidth="1" /></Line></Cell>
            <Cell $w={14}><Chevron /></Cell>
            <Cell $w={30} aria-label="Decrease indent"><Line w={18} h={18}><path d={lines([1.500, 16.500], 1, 18) + lines([5.500, 9, 12.500], 11, 18)} /><path d="M9 9H2M5 5.500 1.500 9 5 12.500" strokeWidth="2" /></Line></Cell>
            <Cell $w={26} aria-label="Increase indent"><Line w={18} h={18}><path d={lines([1.500, 16.500], 1, 18) + lines([5.500, 9, 12.500], 11, 18)} /><path d="M1 9h7M5 5.500 8.500 9 5 12.500" strokeWidth="2" /></Line></Cell>
            <Cell $w={28} aria-label="Line spacing"><Line w={18} h={18}><path d={lines([4, 7.500, 11, 14.500], 9, 18)} /><path d="M4 2v14M1 5l3-3.500L7 5M1 13l3 3.500L7 13" strokeWidth="1.600" /></Line></Cell>
            <Cell $w={8}><Chevron /></Cell>
          </Row>
          <Row>
            <Cell $w={26} aria-label="Align left"><Line w={17} h={18} stroke={1}><path d={lines([1.500, 7.500, 13.500], 0, 17) + lines([4.500, 10.500, 16.500], 0, 12)} /></Line></Cell>
            <Cell $w={26} aria-label="Centre"><Line w={17} h={18} stroke={1}><path d={lines([1.500, 7.500, 13.500], 0, 17) + lines([4.500, 10.500, 16.500], 3, 14)} /></Line></Cell>
            <Cell $w={26} aria-label="Align right"><Line w={17} h={18} stroke={1}><path d={lines([1.500, 7.500, 13.500], 0, 17) + lines([4.500, 10.500, 16.500], 5, 17)} /></Line></Cell>
            <Cell $w={26} aria-label="Justify"><Line w={17} h={18} stroke={1}><path d={lines([1.500, 4.500, 7.500, 10.500, 13.500, 16.500], 0, 17)} /></Line></Cell>
            <Sep />
            <Cell $w={22} aria-label="Columns"><Line w={17} h={18} stroke={1}><path d={lines([1.500, 4.500, 7.500, 10.500, 13.500, 16.500], 0, 8) + lines([1.500, 4.500, 7.500, 10.500, 13.500, 16.500], 10, 17)} /></Line></Cell>
            <Cell $w={16}><Chevron /></Cell>
          </Row>
        </Rows>
        <Stack>
          <StackRow>
            <Cell $w={26} aria-label="Text direction"><Line w={20} h={18}><path d="M2 0v16M6 0v16M10 9v7M15 12v4M0 14l2 3 2-3M4 14l2 3 2-3M8 14l2 3 2-3M13 14l2 3 2-3" strokeWidth="1" /><path d="m10.500 9 4-9 4 9M12 6h5" strokeWidth="1.600" /></Line></Cell>
            <Cell $w={8}><Chevron /></Cell>
          </StackRow>
          <StackRow>
            <Cell $w={26} aria-label="Align text"><Line w={20} h={18}><path d="M6 1.500H1v15h5M14 1.500h5v15h-5M6 7.500h8M6 10.500h8M10 0v6M7.500 3 10 .5 12.500 3M10 12v6M7.500 15l2.500 2.500 2.500-2.500" /></Line></Cell>
            <Cell $w={8}><Chevron /></Cell>
          </StackRow>
          <StackRow>
            <Cell $w={26} aria-label="Convert to SmartArt"><Line w={20} h={16}><path d="M0 1h12l4 5H8v4H0l4-4.500Z" fill="currentColor" stroke="none" /><path d="M7.500 6.500h12v8h-12Z" fill="#f5f2f5" /><path d="M10 9.500h1M13 9.500h5M10 12h1M13 12h5" /></Line></Cell>
            <Cell $w={8}><Chevron /></Cell>
          </StackRow>
        </Stack>
      </GroupBody>
      <Foot name="Paragraph" dim />
    </Group>

    <Group>
      <GroupBody $left={10}>
        <Gallery>
          <Shapes>
            {shapePaths.map((d, i) => (
              <Line key={i} w={18} h={16} stroke={1}>
                <path d={d} />
                {i === 0 && <path d="m3.500 10 2.500-6 2.500 6M4.500 8h3" stroke="#2f63b5" strokeWidth="1.500" />}
              </Line>
            ))}
          </Shapes>
          <GalleryScroll>
            <ScrollCell $off aria-label="Previous shapes"><Solid w={6} h={4}><path d="M0 4 3 0l3 4Z" /></Solid></ScrollCell>
            <ScrollCell aria-label="Next shapes"><Solid w={6} h={4}><path d="m0 0 3 4 3-4Z" /></Solid></ScrollCell>
            <ScrollCell aria-label="All shapes"><Solid w={8} h={7}><path d="M0 0h8v1H0ZM1 3l3 4 3-4Z" /></Solid></ScrollCell>
          </GalleryScroll>
        </Gallery>
        <Big $w={62}>
          <svg width="34" height="34" viewBox="0 0 34 34" aria-hidden="true">
            <path d="M14 7h13v13H14ZM7 15h13v11H7Z" fill="#efc46e" /><path d="M1.500.500h14v14h-14ZM18.500 18.500h14v14h-14Z" fill="#fff" stroke="#777" />
          </svg>
          <BigLine>Arrange</BigLine><BigLine><Chevron /></BigLine>
        </Big>
        <Big $w={50} $dim>
          <svg width="36" height="34" viewBox="0 0 36 34" aria-hidden="true">
            <rect x="1.500" y="1.500" width="29" height="28" rx="6" fill="none" stroke="#b7b4b7" /><path d="M35 11 21 27l3 3 11-14Z" fill="#aaa7aa" /><path d="M21 26c-5 0-4 7-11 7 6 3 14 1 14-4Z" fill="#999699" />
          </svg>
          <BigLine>Quick</BigLine><BigLine>Styles <Chevron /></BigLine>
        </Big>
        <Stack>
          <Small $dim><Line w={20} h={18}><path d="m4 8 6-5 6 6-6 6Z" /><path d="M9 5V1h2v7M16 9c3 3 1 5 0 5" /></Line><SmallText>Shape Fill</SmallText><Chevron /></Small>
          <Small $dim><Line w={20} h={18}><path d="M14 2H1.500v12l4-4" /><path d="m7 11 9-9 2 2-9 8H7Z" fill="currentColor" /></Line><SmallText>Shape Outline</SmallText><Chevron /></Small>
          <Small $dim><Line w={20} h={18}><path d="m2 10 4-7h11l-3 8H3Z" fill="#fff" /><path d="M1 11h13l4-8 1 4-4 9H3Z" fill="currentColor" /></Line><SmallText>Shape Effects</SmallText><Chevron /></Small>
        </Stack>
      </GroupBody>
      <Foot name="Drawing" dim />
    </Group>

    <Group>
      <GroupBody $left={14}>
        <Stack>
          <Small><Line w={18} h={18} stroke={1.800}><g stroke="#3c7fd0"><circle cx="11" cy="6.500" r="5" /><path d="M7.500 10.500 2 16" /></g></Line><SmallText>Find</SmallText></Small>
          <Small>
            <svg width="18" height="18" viewBox="0 0 18 18" fontSize="10" fontFamily="Open Sans" aria-hidden="true">
              <text x="0" y="8" fill="#444">a</text><text x="6" y="8" fill="#8a5cc0">b</text><text x="6" y="17" fill="#444">a</text><text x="12" y="17" fill="#3c7fd0">c</text>
              <path d="M1 10v3h4M3 11l2 2-2 2" fill="none" stroke="#3c7fd0" />
            </svg>
            <SmallText $wide>Replace</SmallText><Chevron />
          </Small>
          <Small><Line w={18} h={18}><path d="M5 1v14l3.500-3.500 2.500 5 2-1-2.500-5H15Z" fill="#fff" /></Line><SmallText>Select</SmallText><Chevron /></Small>
        </Stack>
      </GroupBody>
      <Foot name="Editing" plain />
    </Group>
    <Collapse aria-label="Collapse the ribbon"><Line w={12} h={8}><path d="m1 7 5-5 5 5" /></Line></Collapse>
  </Ribbon>
);

const SchemeTable = () => (
  <Scheme>
    <colgroup>{columns.map((c, i) => <col key={i} style={{ width: `${(c / 914) * 100}%` }} />)}</colgroup>
    <thead>
      <tr><Strip colSpan={12} /></tr>
      <SchemeRow $h={16}><Th colSpan={12}>STUDY SCHEME FOR FIRST YEAR B.TECH 2021-25 BATCH</Th></SchemeRow>
      <SchemeRow $h={11}><Th colSpan={12} $size={10} $lh={10}>SEMESTER-I</Th></SchemeRow>
      <SchemeRow $h={12}><Th colSpan={12} $lh={11}>B.tech CSE (SPL)</Th></SchemeRow>
      <SchemeRow $h={29}>
        <Th rowSpan={2}>Title of Course</Th>
        <Th colSpan={2} $lh={14}>{"Pre-requisite\nCourse, if any"}</Th>
        <Th colSpan={4}>Periods/Week</Th>
        <Th colSpan={3}>Marks</Th>
        <Th rowSpan={2}>{"Duration\nof Exam"}</Th>
        <Th rowSpan={2}>Credits</Th>
      </SchemeRow>
      <SchemeRow $h={33}>
        {["Title", "Code", "L", "T", "P", "Total", "Int./\nContinuous", "End Sem.", "Total"].map((t, i) => <Th key={i}>{t}</Th>)}
      </SchemeRow>
    </thead>
    <tbody>
      {courses.map((c) => (
        <SchemeRow key={c.name} $h={c.h}>
          <Td $mark={c.mark} $low={c.low}>{c.name}</Td>
          {c.v.map((t, i) => <Td key={i}>{t}</Td>)}
        </SchemeRow>
      ))}
      <SchemeRow $h={20}>{totals.map((t, i) => <Td key={i} $bold>{t}</Td>)}</SchemeRow>
    </tbody>
  </Scheme>
);

type Member = { name: string; icons: "slash" | "off" | "none"; speaking?: boolean };
const members: Member[] = [
  { name: "Pooja Khura...", icons: "slash" },
  { name: "Jyoti Chawla", icons: "none", speaking: true },
  { name: "Dr Pardeep ...", icons: "slash" },
  { name: "A2 Dee...", icons: "off" },
  { name: "sadikh (...", icons: "off" },
  { name: "Shrija_roy", icons: "off" },
  { name: "Vani_jain", icons: "off" },
];

export default function App() {
  return (
    <Page>
      <Global />
      <TitleBar>
        <AppTitle>Microsoft Teams</AppTitle>
        <WindowButtons>
          <WindowButton aria-label="Minimise"><Line w={16} h={16}><path d="M0 8h16" strokeWidth="1.500" /></Line></WindowButton>
          <WindowButton aria-label="Maximise"><Line w={16} h={16}><path d="M1 1h14v14H1Z" strokeWidth="1.500" /></Line></WindowButton>
          <WindowButton aria-label="Close"><Line w={16} h={16}><path d="m1 1 14 14M15 1 1 15" /></Line></WindowButton>
        </WindowButtons>
      </TitleBar>
      <Toolbar>
        <svg width="20" height="20" viewBox="0 0 20 20" aria-hidden="true"><circle cx="10" cy="10" r="9" fill="none" stroke="#fff" strokeWidth="1.600" /><circle cx="10" cy="10" r="6" fill="#c4314b" /></svg>
        <Timer>--:--</Timer>
        <OutlineButton $w={178}>Request control</OutlineButton>
        <Divider $left={41} $right={15} />
        <ToolButton aria-label="Participants">
          <Line w={26} h={26} stroke={1.800}><circle cx="9.500" cy="6.500" r="5" /><circle cx="20.500" cy="8" r="3.300" /><path d="M3 14.500h13c1 0 1.500.5 1.500 1.500 0 5-3 8-8 8s-8-3-8-8c0-1 .5-1.500 1.500-1.500ZM20 14.500h3c1 0 1.500.5 1.500 1.500 0 4-2 6.500-5.500 6.500" /></Line>
        </ToolButton>
        <ToolButton aria-label="Raise hand">
          <Line w={24} h={28} stroke={1.700}><path d="M6 15V6.500a1.700 1.700 0 0 1 3.400 0V13 4a1.700 1.700 0 0 1 3.400 0v9V5.500a1.700 1.700 0 0 1 3.400 0V16l2.300-2c1.500-1 3.500 0 3 1.500-1 2.500-3 5.500-4.500 8-1.500 2.500-3.500 3.300-6 3.300-4.500 0-8-3-8-8.500V9a1.500 1.500 0 0 1 3 0" /></Line>
        </ToolButton>
        <ToolButton $focus aria-label="More actions"><Solid w={24} h={8}><circle cx="3.500" cy="4" r="2.700" /><circle cx="12" cy="4" r="2.700" /><circle cx="20.500" cy="4" r="2.700" /></Solid></ToolButton>
        <Divider $left={15} $right={16} />
        <ToolButton $off aria-label="Camera off"><CamOff big /></ToolButton>
        <ToolButton $off aria-label="Microphone off"><MicOff big /></ToolButton>
        <ToolButton $off aria-label="Share content"><Solid w={26} h={20}><rect width="26" height="20" rx="3" /><path d="M13 16V4M8.500 8.500 13 4l4.500 4.500" stroke="#1f1f1f" strokeWidth="1.800" fill="none" /></Solid></ToolButton>
        <LeaveButton>
          <Solid w={25} h={12}><path d="M12.500 1c6 0 12 2.500 12 7 0 1.500-.5 3-2 3-1.500 0-4-.8-5-1.500s-.8-2-1-3.500c-2-.8-6-.8-8 0-.2 1.500 0 2.800-1 3.500s-3.500 1.500-5 1.500-2-1.500-2-3c0-4.500 6-7 12-7Z" /></Solid>
          Leave
        </LeaveButton>
      </Toolbar>
      <Banner>
        <BannerText>
          <Solid w={20} h={19}><path fillRule="evenodd" d="M10 .5c.6 0 1 .3 1.300.8l8.200 15.200c.5 1-.1 2-1.300 2H1.800c-1.200 0-1.800-1-1.300-2L8.700 1.300c.3-.5.700-.8 1.300-.8ZM9.200 6v6.500h1.600V6Zm0 8v2h1.600v-2Z" /></Solid>
          <BannerLead>Recording has started.</BannerLead>
          <span>This meeting is being recorded. By joining, you are giving consent for this meeting to be recorded. <PolicyLink href="#privacy">Privacy policy</PolicyLink></span>
        </BannerText>
        <DismissButton $w={120}>Dismiss</DismissButton>
      </Banner>

      <Main>
        <Stage>
          <Share>
            <PptHead>
              <HeadArt>
                <svg width="540" height="73" viewBox="0 0 540 73" fill="none" stroke="#a04222" aria-hidden="true">
                  <path d="M8 0v28M17 0v34M26 0v48M35 0v38" strokeWidth="4" />
                  <path d="M44 0h18v24Z" fill="#a04222" stroke="none" /><path d="M86 0h14v47L86 42Z" fill="#a04222" stroke="none" />
                  <path d="M112 0v48M121 0v48M130 0v46M139 0v42M148 0v38M157 0v33M166 0v27" strokeWidth="4" />
                  <circle cx="266" cy="35" r="20" strokeWidth="6" /><circle cx="266" cy="35" r="9" strokeWidth="7" />
                  <circle cx="373" cy="10" r="60" strokeWidth="12" />
                  <path d="m324 8 50 58M336 3l48 55M352 3l40 46M366 3l34 38M382 3l24 26" strokeWidth="5" />
                  <path d="m452 38 36-38M464 46 506 0M478 50 522 4M494 54l40-42" strokeWidth="4" />
                </svg>
              </HeadArt>
              <PptTitle>
                <Quick>
                  <Cell $w={32} aria-label="Save"><Line w={16} h={16} stroke={1.800}><path d="M1 1h14v14H1ZM1 9h14M5 15v-4h6v4" /></Line></Cell>
                  <Cell $w={34} $dim aria-label="Undo"><Line w={16} h={16} stroke={2.500}><path d="M6 1 2 5l4 4M2 5h7c7 0 7 9 0 9" /></Line></Cell>
                  <Cell $w={8} $dim><Chevron /></Cell>
                  <Cell $w={38} $dim aria-label="Redo"><Line w={16} h={16} stroke={2.500}><path d="M4 3c-5 5-1 11 4 11s8-6 4-10M9 1v4h5" /></Line></Cell>
                  <Cell $w={30} aria-label="Start slide show"><Line w={18} h={18} stroke={1.500}><path d="M0 1.500h18M2 1.500v9h6M5 5h4M5 8h3M9 12v4M5 17h8" /><circle cx="12.500" cy="8.500" r="4" /><path d="m11.500 6.500 3 2-3 2Z" fill="currentColor" stroke="none" /></Line></Cell>
                  <Cell $w={30} aria-label="Touch mode"><Solid w={14} h={18}><path d="M4 5a2 2 0 0 1 4 0v5l5 1.500c1 .5.500 5-1 6.500H6L1 12c1-1 2-1 3 0Z" /><path d="M2.500 7a4 4 0 1 1 7 0" fill="none" stroke="currentColor" strokeWidth="1.200" /></Solid></Cell>
                  <Cell $w={10}><Chevron /></Cell>
                  <Cell $w={42} aria-label="Customise toolbar"><Solid w={8} h={8}><path d="M0 0h8v1.500H0ZM0 3.500h8L4 8Z" /></Solid></Cell>
                </Quick>
                <DocName>Instructions for Bridge Course  -  PowerPoint</DocName>
                <Account>
                  <span>JYOTI CHAWLA</span><Initials>JC</Initials>
                  <Cell $w={54} aria-label="Ribbon display options"><Line w={17} h={13} stroke={1.400}><path d="M1 1h15v11H1ZM1 3.500h15M8.500 10.500V5.500M6 8l2.500-2.500L11 8" /></Line></Cell>
                  <Cell $w={54} aria-label="Minimise"><Line w={12} h={12} stroke={1.500}><path d="M0 6h12" /></Line></Cell>
                  <Cell $w={54} aria-label="Restore"><Line w={13} h={13} stroke={1.300}><path d="M1 4h8v8H1ZM3 4V1.500h8.500V10H9" /></Line></Cell>
                  <Cell $w={54} aria-label="Close"><Line w={13} h={13} stroke={1.500}><path d="m1 1 11 11M12 1 1 12" /></Line></Cell>
                </Account>
              </PptTitle>
              <Tabs>
                {tabNames.map((t) => <Tab key={t} $on={t === "Home"} $file={t === "File"}>{t}</Tab>)}
                <TellMe><Line w={14} h={20} stroke={1.500}><path d="M4.500 14c0-3-3.500-4-3.500-7.500a6 6 0 0 1 12 0C13 10 9.500 11 9.500 14ZM4.500 16.500h5M5.500 19h3" /></Line>Tell me what you want to do</TellMe>
                <ShareButton><Line w={17} h={18} stroke={1.200}><circle cx="8" cy="6" r="4.500" /><path d="M1 17c0-4 3-6.500 7-6.500M12.500 10v7M9 13.500h7" /></Line>Share</ShareButton>
              </Tabs>
            </PptHead>
            <RibbonBar />
            <Work>
              <Thumbs>
                <ThumbItem>1<ThumbFrame><IntroSlide /></ThumbFrame></ThumbItem>
                <ThumbItem>2<ThumbFrame>
                  <MiniSlide x={77} y={78} cols={[211, 64, 53, 40, 36, 38, 49, 73, 67, 64, 89, 107]} rows={physicsCourses} heads={[22, 18, 18, 44, 54]} foot={25} branch="B.tech CSE/ECE/IT" />
                </ThumbFrame></ThumbItem>
                <ThumbItem $on>3<ThumbFrame $on>
                  <MiniSlide x={40} y={102} cols={columns} rows={courses} heads={[20, 11, 12, 29, 33]} foot={20} branch="B.tech CSE (SPL)" />
                </ThumbFrame></ThumbItem>
              </Thumbs>
              <Canvas>
                <Slide><SchemeTable /></Slide>
                <MoveCursor>
                  <svg width="24" height="34" viewBox="0 0 24 34" aria-hidden="true">
                    <path d="M10 1v6M7.500 3.500 10 1l2.500 2.500M1 10h6M3.500 7.500 1 10l2.500 2.500M13 10h6M16.500 7.500 19 10l-2.500 2.500M10 13v5" fill="none" stroke="#111" strokeWidth="1.500" />
                    <path d="M10 10v18l4-4 4 9 3-1.500-4-8.500h5.500Z" fill="#fff" stroke="#222" />
                  </svg>
                </MoveCursor>
              </Canvas>
              <ScrollBar>
                <ScrollBtn aria-label="Scroll up"><Solid w={8} h={5}><path d="m0 5 4-5 4 5Z" /></Solid></ScrollBtn>
                <ScrollTrack><ScrollThumb /></ScrollTrack>
                <ScrollBtn aria-label="Scroll down"><Solid w={8} h={5}><path d="m0 0 4 5 4-5Z" /></Solid></ScrollBtn>
                <ScrollBtn aria-label="Previous slide"><Solid w={8} h={9}><path d="m0 4 4-4 4 4ZM0 9l4-4 4 4Z" /></Solid></ScrollBtn>
                <ScrollBtn aria-label="Next slide"><Solid w={8} h={9}><path d="m0 0 4 4 4-4ZM0 5l4 4 4-4Z" /></Solid></ScrollBtn>
                <ScrollBtn as="span" />
              </ScrollBar>
            </Work>
            <Status>
              <StatusText $right={20}>Slide 3 of 3</StatusText>
              <StatusText $right={19} aria-label="Spelling"><Line w={17} h={14} stroke={1}><path d="M8 2C6 .5 3 .5 1 1v11c2-.5 5-.5 7 1 2-1.500 4-1.500 6-1V8M8 2v11M8 2c1-.8 3-1 4-1M10 9l5-8 1.500 1-5 7.500Z" /></Line></StatusText>
              <StatusText>English (India)</StatusText>
              <Spring />
              <StatusText $right={22}><Line w={14} h={13} stroke={1.200}><path d="M1 6h12M1 9h12M1 12h8M4.500 3.500 7 1l2.500 2.500Z" /></Line>Notes</StatusText>
              <StatusText $right={20}><Solid w={17} h={15}><path d="M0 0h17v10h-7l-4 5v-5H0Z" /></Solid>Comments</StatusText>
              <ViewButton $on aria-label="Normal view"><Line w={15} h={13} stroke={1}><path d="M.5.500h14v12H.5ZM4.500.500v12M7 3.500h5v4H7ZM4.500 10H14" /></Line></ViewButton>
              <ViewButton aria-label="Slide sorter"><Line w={15} h={13} stroke={1}><path d="M.5.500h6v4.500h-6ZM9 .5h5.500v4.500H9ZM.5 8h6v4.500h-6ZM9 8h5.500v4.500H9Z" /></Line></ViewButton>
              <ViewButton aria-label="Reading view"><Line w={15} h={13} stroke={1}><path d="M.5 1h6l1 1 1-1h6v10.500h-6l-1 1-1-1h-6ZM7.500 2v10M2.500 4h3M2.500 6.500h3M2.500 9h3M9.500 4h3M9.500 6.500h3M9.500 9h3" /></Line></ViewButton>
              <ViewButton aria-label="Slide show"><Line w={15} h={13} stroke={1}><path d="M0 1h15M1.500 1v6.500h12V1M7.500 7.500v5M4 12.500h7M5 4h5" /></Line></ViewButton>
              <StatusText aria-label="Zoom out"><Line w={13} h={12}><path d="M4 6h9" /></Line></StatusText>
              <ZoomRange type="range" min={0} max={100} defaultValue={31} aria-label="Zoom" />
              <StatusText $right={14} aria-label="Zoom in"><Line w={10} h={12}><path d="M0 6h10M5 1v10" /></Line></StatusText>
              <StatusText $right={17}>67%</StatusText>
              <StatusText $right={8} aria-label="Fit slide"><Line w={12} h={13} stroke={1}><path d="M4 .5H.5V4M8 .5h3.500V4M4 12.500H.5V9M8 12.500h3.500V9M6 3v7M3 6.500h6" /></Line></StatusText>
            </Status>
            <SharedTaskbar>
              <Task $w={56} aria-label="Start"><WinLogo size={20} color="#111" /></Task>
              <Search $w={400}><Magnifier /><SearchInput aria-label="Search shared desktop" placeholder="Type here to search" /></Search>
              <Task $w={58} aria-label="Task view"><TaskView /></Task>
              <Task $w={58} aria-label="L app"><LLogo /></Task>
              <Task $w={58} aria-label="File Explorer"><Folder /></Task>
              <Task $w={60} aria-label="Mail"><Mail /></Task>
              <Task $w={58} aria-label="Chrome"><Chrome /></Task>
              <Task $w={58} $state="light" aria-label="PowerPoint"><PptLogo /></Task>
              <Task $w={58} aria-label="Teams"><TeamsLogo /></Task>
              <Spring />
              <Weather $right={14} $top={3} $size={16}><Cloud rain />32°C  AQI 102</Weather>
              <Task $w={36} aria-label="Hidden icons"><CaretUp /></Task>
              <Task $w={38} aria-label="Microphone"><MicTray color="#111" /></Task>
              <Lang $w={42}>ENG</Lang>
              <Clock><span>11:06</span><span>13-09-2021</span></Clock>
              <Task $w={48} aria-label="Notifications">
                <Solid w={20} h={20}><path d="M0 0h19v14h-8l-2 4-3-4H0Z" /><path d="M3 4h12M3 7h12M3 10h7" stroke="#fff" strokeWidth="1.200" /><circle cx="15" cy="14" r="4.500" stroke="#dde3f1" strokeWidth="1" /></Solid>
              </Task>
              <Task $w={9} aria-hidden="true" tabIndex={-1} />
              <DesktopEdge />
            </SharedTaskbar>
          </Share>
          <PresenterTag>Jyoti Chawla</PresenterTag>
        </Stage>

        <Side>
          <People>
            {members.map((m) => (
              <Person key={m.name}>
                <Avatar $size={88} $speaking={m.speaking}><PersonGlyph size={44} /></Avatar>
                <PersonName>
                  <NameText $pad={m.icons !== "none"}>{m.name}</NameText>
                  {m.icons === "slash" && <MicSlash />}
                  {m.icons === "off" && <><CamOff /><MicOff /></>}
                </PersonName>
              </Person>
            ))}
            <Person><Avatar as="button" $size={88} $more>+136</Avatar></Person>
          </People>
          <Self><Avatar $size={70}><PersonGlyph size={35} /></Avatar></Self>
        </Side>
      </Main>

      <Taskbar>
        <Task $w={61} aria-label="Start"><WinLogo size={20} color="#fff" /></Task>
        <Search $w={428} $own><Magnifier /><SearchInput aria-label="Search" placeholder="Type here to search" /></Search>
        <Task $w={62} aria-label="Cortana"><Line w={20} h={20} stroke={2.500}><circle cx="10" cy="10" r="8.500" /></Line></Task>
        <Task $w={62} aria-label="Task view"><TaskView /></Task>
        <Task $w={62} aria-label="File Explorer"><Folder /></Task>
        <Task $w={62} aria-label="Mail"><Mail /></Task>
        <Task $w={62} aria-label="Diamond app"><Diamond /></Task>
        <Task $w={62} $state="open" aria-label="Chrome"><Chrome /></Task>
        <Task $w={62} $state="active" aria-label="Teams"><TeamsLogo recording /></Task>
        <HelpTask aria-label="Help">
          <svg width="30" height="30" viewBox="0 0 30 30" aria-hidden="true">
            <circle cx="14" cy="14" r="13" fill="#0f8fd0" stroke="#fff" strokeWidth="2" /><LogoLetter x="14" y="21" fontSize="20">?</LogoLetter>
            <circle cx="24" cy="22" r="6" fill="#0f8fd0" /><LogoLetter x="24" y="26" fontSize="11">i</LogoLetter>
          </svg>
        </HelpTask>
        <Weather $right={14} $size={17}><Cloud />26°C  AQI 32</Weather>
        <Task $w={30} aria-label="Hidden icons"><CaretUp /></Task>
        <Task $w={30} aria-label="Camera"><Line w={18} h={20} stroke={1.300}><path d="M3 4c2-3 8-3 10 0M3 16c2 3 8 3 10 0M2 6.500h9v7H2ZM11 9l4-2.500v7L11 11" /></Line></Task>
        <Task $w={30} aria-label="OneDrive"><svg width="20" height="14" viewBox="0 0 20 14" aria-hidden="true"><path d="M5 13c-3 0-5-1.500-5-4s2-4 4-4c1-3 3-4.500 6-4.500S15 2 16 5c3 0 4 2 4 4s-1.500 4-4 4Z" fill="#bbb" /><path d="m4 13 8-7 8 6c-1 1-2 1.500-4 1.500Z" fill="#fff" /></svg></Task>
        <Task $w={30} aria-label="Microphone"><MicTray color="#fff" /></Task>
        <Task $w={30} aria-label="Battery"><Line w={19} h={12} stroke={1.400}><path d="M1 1h15v10H1ZM18 4v4" /><path d="M3 3h5v6H3Z" fill="currentColor" stroke="none" /></Line></Task>
        <Task $w={30} aria-label="Wi-Fi"><Line w={18} h={18} stroke={1.400}><path d="M1 16C2 8 8 2 16 1M5 17c1-6 5-10 12-11M9 17c1-4 3-6 8-7" /><circle cx="14" cy="15" r="1.500" fill="currentColor" /></Line></Task>
        <Task $w={30} aria-label="Volume"><Line w={19} h={18} stroke={1.300}><path d="M1 6.500h3L8 3v12l-4-3.500H1ZM10.500 6.500c1.500 1.500 1.500 3.500 0 5M13 4.500c3 3 3 6 0 9M15.500 2.500c4 4 4 9 0 13" /></Line></Task>
        <Task $w={30} aria-label="Dropbox"><svg width="18" height="18" viewBox="0 0 18 18" fill="#8e9490" aria-hidden="true"><path d="m5 0 4 3-4 3-4-3ZM13 0l4 3-4 3-4-3ZM5 6l4 3-4 3-4-3ZM13 6l4 3-4 3-4-3ZM9 11.500l4 3L9 18l-4-3.500Z" /></svg></Task>
        <Lang $w={46}>ENG</Lang>
        <Clock $tall><span>11:06 AM</span><span>13-09-2021</span></Clock>
        <Task $w={63} aria-label="Notifications, 1 new">
          <svg width="30" height="32" viewBox="0 0 30 32" aria-hidden="true"><path d="M0 2h20v15h-8l-3 5-3-5H0Z" fill="#fff" /><path d="M4 6h12M4 9.500h12M4 13h8" stroke="#222" strokeWidth="1.400" /><circle cx="20" cy="22" r="9.500" fill="#2c2c2c" stroke="#888" /><text x="20" y="27" fontSize="14" fontFamily="Open Sans" textAnchor="middle" fill="#fff">1</text></svg>
        </Task>
        <DesktopEdge />
      </Taskbar>
    </Page>
  );
}
